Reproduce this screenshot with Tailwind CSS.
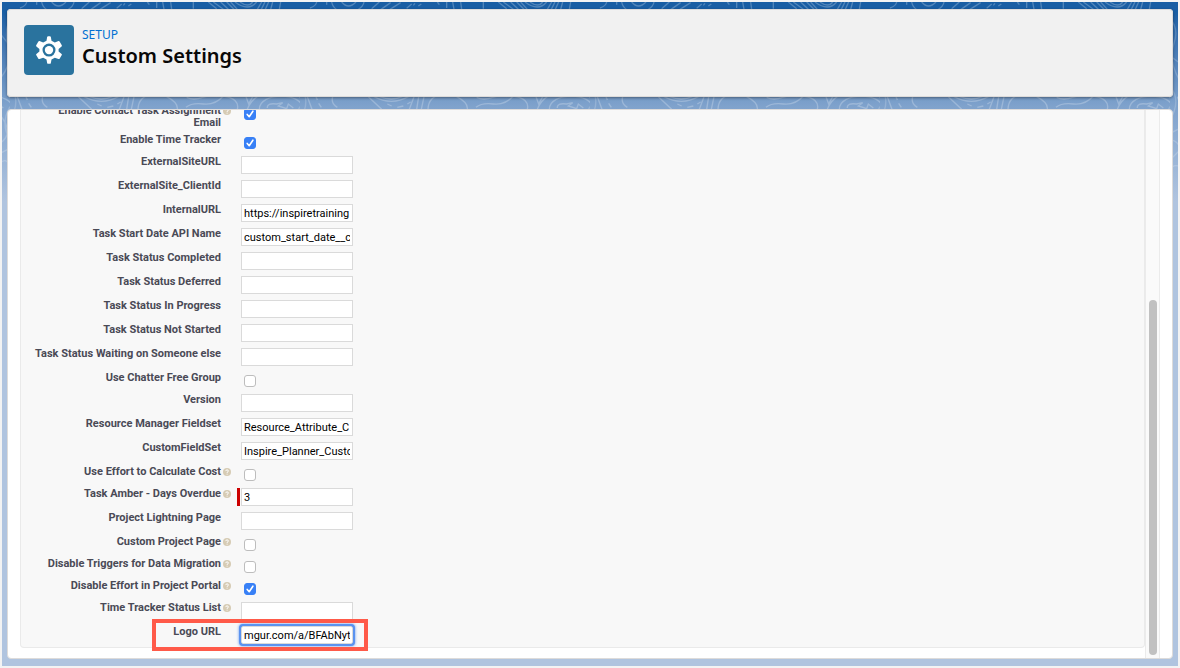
<!DOCTYPE html>
<html lang="en">
<head>
<meta charset="utf-8">
<meta name="viewport" content="width=device-width, initial-scale=1">
<title>Custom Settings</title>
<script src="https://cdn.jsdelivr.net/npm/@tailwindcss/browser@4"></script>
</head>
<body class="h-screen overflow-hidden bg-[#f3f3f3] p-0.5 font-[Roboto,'Liberation_Sans',sans-serif]">
<div class="relative flex h-full flex-col gap-3 bg-[#b0c4df] px-[5px] pt-[7px] pb-[7px]">
  <!-- Topographic backdrop fading down the page -->
  <div class="absolute inset-x-0 top-0 h-[200px] bg-linear-to-b from-[#195ea4] from-5% via-[#7fa2cc] via-52% to-[#b0c4df]" aria-hidden="true">
    <svg class="h-full w-full" fill="none">
      <defs>
        <pattern id="topo" x="298" y="-2" width="290" height="200" patternUnits="userSpaceOnUse" viewBox="0 0 870 600">
          <g stroke="#fff" stroke-opacity=".24" stroke-width="4" fill="none">
            <path d="M30 24Q48 18 50 6M80 6V14M95 6Q98 22 112 30M172 30Q190 20 192 6M125 6Q145 30 168 6M215 26L238 6M243 28L272 8M270 28L302 8M320 25L335 12M340 16L345 10M355 18L364 12M412 6L418 14M440 6V24M458 6L462 28M482 6L485 28M550 6V26M595 6L620 26M610 6L640 28M632 6L655 28M650 6L672 28M662 6L682 28M675 6Q715 36 740 6M690 6Q715 24 728 6M755 6L742 28M765 6L754 28M776 6L766 28M788 6L782 28M812 6L808 28"/>
            <path d="M22 290L36 328M48 290L52 300M56 310L64 322M98 290Q92 310 112 322M205 290L245 328M222 290Q275 318 325 290M240 290Q275 304 306 290M262 312L275 318M292 322L310 318M322 312L332 306M342 290L328 328M356 290L350 328M372 290L364 328M384 328Q385 290 425 284M470 290Q505 308 502 328M530 292Q550 302 578 292T620 290M528 322Q545 308 580 312T640 288Q690 296 682 328M708 290L716 312L728 290M712 328Q722 302 742 290M868 290Q888 308 885 328M748 328C748 275 880 275 878 328M772 324Q770 308 800 312L818 308L805 318L830 326L835 312L850 324"/>
            <path d="M-10 45Q30 80 12 130T28 240M870 60Q852 90 864 140T845 230M-10 160L30 190M840 100L880 150M0 260Q35 300 0 360M840 345Q885 400 840 430M870 320Q840 370 870 420M0 400L30 385M0 430Q10 410 30 440M840 460L880 440M0 480L30 450M840 490Q860 470 870 500M0 510Q10 490 30 500" stroke-opacity=".18"/>
          </g>
        </pattern>
      </defs>
      <rect width="100%" height="100%" fill="url(#topo)"/>
    </svg>
  </div>

  <header class="relative flex h-[88px] shrink-0 items-start gap-2 rounded bg-[#f1f1f1] px-[17px] py-4 shadow-[0_1px_3px_#0006,inset_0_0_0_1px_#dddbda]">
    <span class="grid size-[50px] place-items-center rounded bg-[#2a739e]">
      <svg class="size-7" viewBox="0 0 28 28" fill="#fff" aria-hidden="true">
        <path fill-rule="evenodd" d="M12.200 .8Q12.500 .2 13.200 .2H14.800Q15.500 .2 15.800 .8L16.500 4.700L19.800 6.500L23.500 5.100Q24.200 4.900 24.600 5.500L26.800 9.300Q27.100 9.900 26.600 10.400L23.600 12.900V15.500L26.600 18Q27.100 18.500 26.800 19.100L24.600 22.700Q24.200 23.300 23.500 23L19.800 21.700L16.500 23.500L15.800 27.200Q15.500 27.800 14.800 27.800H13.200Q12.500 27.800 12.200 27.200L11.500 23.500L8.200 21.700L4.500 23Q3.800 23.300 3.400 22.700L1.200 19.100Q.9 18.500 1.400 18L4.400 15.500V12.900L1.400 10.400Q.9 9.900 1.200 9.300L3.400 5.500Q3.800 4.900 4.500 5.100L8.200 6.500L11.500 4.700ZM14 7.600A6.500 6.500 0 1 0 14 20.600A6.500 6.500 0 1 0 14 7.600Z"/>
        <circle cx="14" cy="14.100" r="4.200"/>
      </svg>
    </span>
    <div class="font-['Noto_Sans','Open_Sans',sans-serif]">
      <p class="pt-0.5 text-[12px] leading-4 text-[#0070d2]">SETUP</p>
      <h1 class="text-[20px] leading-[26px] font-semibold text-[#080707]">Custom Settings</h1>
    </div>
  </header>

  <main class="relative flex min-h-0 flex-1 overflow-hidden rounded border border-[#dddbda] bg-white px-3">
    <form class="flex min-w-0 flex-1 flex-col justify-end overflow-hidden pb-2.5">
      <div id="fields" class="shrink-0 rounded-b border border-t-0 border-[#eaeaea] bg-[#f8f8f8] pt-10 text-[11px] leading-3"></div>
    </form>
    <div class="flex w-[15px] flex-col items-center border-x border-[#ebebeb] bg-[#fafafa] pt-[190px] pb-[3px]" aria-hidden="true">
      <div class="w-2 flex-1 rounded-full bg-[#c1c1c1]"></div>
    </div>
  </main>
</div>

<script>
  // [label, type, value, has help icon]
  const fields = [
    ['Enable Contact Task Assignment Email', 'check', true, true],
    ['Enable Time Tracker', 'check', true],
    ['ExternalSiteURL', 'text', ''],
    ['ExternalSite_ClientId', 'text', ''],
    ['InternalURL', 'text', 'https://inspiretraining'],
    ['Task Start Date API Name', 'text', 'custom_start_date__c'],
    ['Task Status Completed', 'text', ''],
    ['Task Status Deferred', 'text', ''],
    ['Task Status In Progress', 'text', ''],
    ['Task Status Not Started', 'text', ''],
    ['Task Status Waiting on Someone else', 'text', ''],
    ['Use Chatter Free Group', 'check', false],
    ['Version', 'text', ''],
    ['Resource Manager Fieldset', 'text', 'Resource_Attribute_C'],
    ['CustomFieldSet', 'text', 'Inspire_Planner_Custo'],
    ['Use Effort to Calculate Cost', 'check', false, true],
    ['Task Amber - Days Overdue', 'required', '3', true],
    ['Project Lightning Page', 'text', ''],
    ['Custom Project Page', 'check', false, true],
    ['Disable Triggers for Data Migration', 'check', false, true],
    ['Disable Effort in Project Portal', 'check', true, true],
    ['Time Tracker Status List', 'text', '', true],
    ['Logo URL', 'logo', 'mgur.com/a/BFAbNyt'],
  ];
  const shortRows = ['Enable Time Tracker', 'Use Chatter Free Group', 'Use Effort to Calculate Cost', 'Custom Project Page', 'Disable Triggers for Data Migration', 'Disable Effort in Project Portal'];
  const help = '<svg class="mt-[2px] size-2" viewBox="0 0 8 8" role="img" aria-label="Help"><circle cx="4" cy="4" r="4" fill="#d6cbb4"/><path d="M2.700 3.100Q2.800 1.900 4.100 1.900T5.400 3.100Q5.300 3.800 4.100 4.300V4.900M4.100 5.700V6.600" fill="none" stroke="#fff" stroke-width="1"/></svg>';
  const inputBase = "block h-[18px] w-28 border border-[#dadada] bg-white px-0.5 text-[11px] text-black";
  document.getElementById('fields').innerHTML = fields.map(([label, type, value, hasHelp], i) => {
    const check = type === 'check';
    const row = i === 0 ? 'h-[29px]' : shortRows.includes(label) ? 'h-[22px]' : 'h-6';
    let control;
    if (check) {
      control = `<input id="f${i}" type="checkbox" ${value ? 'checked' : ''} class="peer col-start-1 row-start-1 size-3 appearance-none rounded-[3px] border border-[#bdbdbd] bg-white checked:border-[#3880f6] checked:bg-[#3880f6]">
        <svg class="pointer-events-none col-start-1 row-start-1 hidden size-3 peer-checked:block" viewBox="0 0 12 12" fill="none" stroke="#fff" stroke-width="1.600" stroke-linecap="round" stroke-linejoin="round"><path d="M3.200 6.400L5.200 8.700L8.900 3.200"/></svg>`;
      control = `<div class="mt-1.5 ml-[13px] grid size-3">${control}</div>`;
    } else {
      const extra = type === 'logo' ? 'rounded-xs outline-2 outline-[#5b93f0] shadow-[0_0_3px_2px_#5b93f0]' : '';
      const bar = type === 'required' ? 'border-l-[3px] border-[#c00] pl-px ml-1.5' : 'ml-2.5';
      control = `<div class="mt-[3px] h-[18px] ${bar}"><input id="f${i}" type="text" value="${value}" class="${inputBase} ${extra}"></div>`;
    }
    return `<div class="flex items-start ${row}">
      <label for="f${i}" class="mt-[3px] w-[200px] shrink-0 pl-3 text-right font-bold text-[#4a4a56]">${label}</label>
      <span class="mt-[3px] ml-0.5 w-2 shrink-0">${hasHelp ? help : ''}</span>
      ${type === 'logo' ? `<div class="relative">${control}<div class="pointer-events-none absolute -top-1 -right-[15px] -left-[79px] h-8 border-4 border-[#ff5a49]"></div></div>` : control}
    </div>`;
  }).join('');
</script>
</body>
</html>
